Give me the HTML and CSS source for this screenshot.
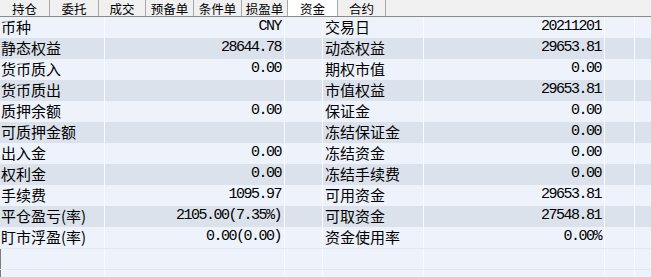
FILE: index.html
```html
<!DOCTYPE html>
<html lang="zh-CN">
<head>
<meta charset="utf-8">
<title>资金</title>
<link rel="stylesheet" href="styles.css">
</head>
<body>
<div class="tabs">
  <div class="tab w50">持仓</div>
  <div class="tab w49">委托</div>
  <div class="tab w47">成交</div>
  <div class="tab w48">预备单</div>
  <div class="tab w48">条件单</div>
  <div class="tab w46">损盈单</div>
  <div class="tab w50 active">资金</div>
  <div class="tab w48">合约</div>
</div>
<div class="grid">
  <div class="row light"><div class="c lab">币种</div><div class="c val">CNY</div><div class="c"></div><div class="c lab2">交易日</div><div class="c val">20211201</div><div class="c"></div><div class="c last"></div></div>
  <div class="row dark"><div class="c lab">静态权益</div><div class="c val">28644.78</div><div class="c"></div><div class="c lab2">动态权益</div><div class="c val">29653.81</div><div class="c"></div><div class="c last"></div></div>
  <div class="row light"><div class="c lab">货币质入</div><div class="c val">0.00</div><div class="c"></div><div class="c lab2">期权市值</div><div class="c val">0.00</div><div class="c"></div><div class="c last"></div></div>
  <div class="row dark"><div class="c lab">货币质出</div><div class="c val"></div><div class="c"></div><div class="c lab2">市值权益</div><div class="c val">29653.81</div><div class="c"></div><div class="c last"></div></div>
  <div class="row light"><div class="c lab">质押余额</div><div class="c val">0.00</div><div class="c"></div><div class="c lab2">保证金</div><div class="c val">0.00</div><div class="c"></div><div class="c last"></div></div>
  <div class="row dark"><div class="c lab">可质押金额</div><div class="c val"></div><div class="c"></div><div class="c lab2">冻结保证金</div><div class="c val">0.00</div><div class="c"></div><div class="c last"></div></div>
  <div class="row light"><div class="c lab">出入金</div><div class="c val">0.00</div><div class="c"></div><div class="c lab2">冻结资金</div><div class="c val">0.00</div><div class="c"></div><div class="c last"></div></div>
  <div class="row dark"><div class="c lab">权利金</div><div class="c val">0.00</div><div class="c"></div><div class="c lab2">冻结手续费</div><div class="c val">0.00</div><div class="c"></div><div class="c last"></div></div>
  <div class="row light"><div class="c lab">手续费</div><div class="c val">1095.97</div><div class="c"></div><div class="c lab2">可用资金</div><div class="c val">29653.81</div><div class="c"></div><div class="c last"></div></div>
  <div class="row dark"><div class="c lab">平仓盈亏(率)</div><div class="c val">2105.00(7.35%)</div><div class="c"></div><div class="c lab2">可取资金</div><div class="c val">27548.81</div><div class="c"></div><div class="c last"></div></div>
  <div class="row light"><div class="c lab">盯市浮盈(率)</div><div class="c val">0.00(0.00)</div><div class="c"></div><div class="c lab2">资金使用率</div><div class="c val">0.00%</div><div class="c"></div><div class="c last"></div></div>
  <div class="row light empty"><div class="c"></div><div class="c"></div><div class="c"></div><div class="c"></div><div class="c"></div><div class="c"></div><div class="c last"></div></div>
  <div class="row light empty"><div class="c"></div><div class="c"></div><div class="c"></div><div class="c"></div><div class="c"></div><div class="c"></div><div class="c last"></div></div>
</div>
</body>
</html>
```
FILE: styles.css
```css
html, body {
  margin: 0;
  padding: 0;
  background: #eef3fb;
}
body {
  width: 651px;
  height: 277px;
  font-family: "Noto Sans CJK SC", sans-serif;
  color: #000;
}
.tabs {
  display: flex;
  height: 16px;
  background: #f0f0f0;
  border-bottom: 1px solid #8a8a8a;
}
.tab {
  box-sizing: border-box;
  height: 16px;
  border-right: 1px solid #a8a8a8;
  font-size: 12.5px;
  line-height: 18px;
  text-align: center;
  white-space: nowrap;
}
.tab.active {
  background: #ffffff;
}
.w46 { width: 46px; }
.w47 { width: 47px; }
.w48 { width: 48px; }
.w49 { width: 49px; }
.w50 { width: 50px; }

.row {
  display: grid;
  grid-template-columns: 105px 180px 38px 101px 181px 30px 1fr;
  height: 21px;
}
.row.light { background: #eef3fb; }
.row.dark { background: #dce2eb; }
.row.empty {
  border-top: 1px solid #e2e8f1;
  height: 20px;
  box-shadow: inset 1px 0 0 #7c7c7c;
}
.c {
  box-sizing: border-box;
  border-right: 1px solid #f8fbff;
  height: 100%;
  white-space: nowrap;
}
.c.last { border-right: none; }
.lab, .lab2 {
  font-size: 15px;
  line-height: 19px;
  padding-left: 1px;
}
.lab2 { padding-left: 2px; }
.val {
  font-family: "Liberation Mono", monospace;
  font-size: 15px;
  letter-spacing: -1.5px;
  line-height: 19px;
  text-align: right;
  padding-right: 3px;
}
```
